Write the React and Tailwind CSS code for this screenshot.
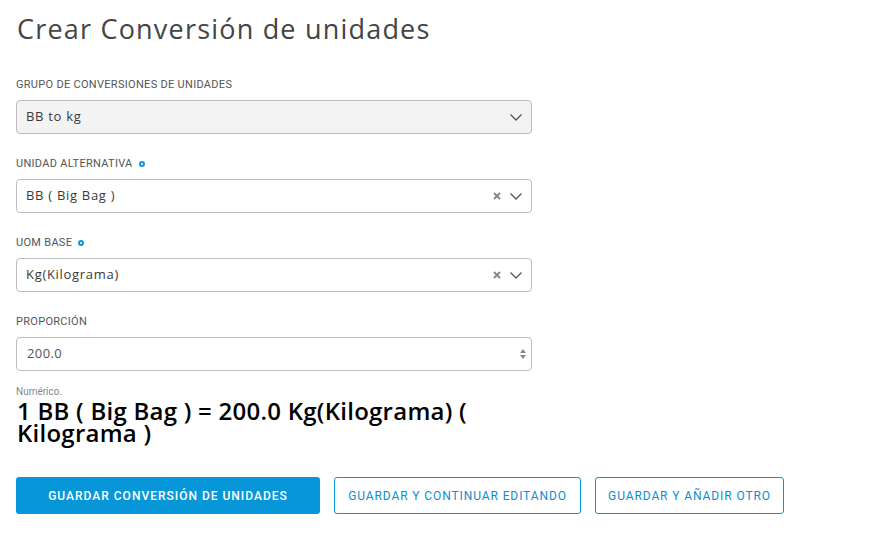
import React from 'react'

const FONT = { fontFamily: '"Open Sans", "Noto Sans", sans-serif' }

function Chevron() {
  return (
    <svg width="14" height="14" viewBox="0 0 14 14" fill="none" stroke="#555" strokeWidth="1.3">
      <path d="M1.5 4.5 L7 10 L12.5 4.5" />
    </svg>
  )
}

function Clear() {
  return (
    <svg width="8" height="8" viewBox="0 0 8 8" stroke="#888" strokeWidth="2">
      <path d="M1 1 L7 7 M7 1 L1 7" />
    </svg>
  )
}

function Label({ children, required }) {
  return (
    <label className="flex items-center gap-[6px] h-[14px] leading-[14px] text-[11px] uppercase text-[#555] mb-[8px] font-['Roboto',sans-serif] tracking-[0.3px]">
      {children}
      {required && <span className="inline-block w-[6px] h-[6px] rounded-full border-[2px] border-[#0a98d8]" />}
    </label>
  )
}

function Select({ value, disabled, clearable }) {
  return (
    <div className={`flex items-center h-[34px] w-[516px] border border-[#bdbdbd] rounded-[4px] pl-[9px] pr-[8px] text-[13px] text-[#3a3a3a] tracking-[0.7px] ${disabled ? 'bg-[#f3f3f3]' : 'bg-white'}`}>
      <span className="flex-1">{value}</span>
      {clearable && <span className="mr-[8px] flex"><Clear /></span>}
      <Chevron />
    </div>
  )
}

export default function App() {
  return (
    <div className="bg-white w-[885px] h-[560px] px-[16px] pt-[9px]" style={FONT}>
      <h1 className="text-[27px] leading-[40px] text-[#444] tracking-[1.2px] font-normal mb-[29px] ml-[1px]">Crear Conversión de unidades</h1>

      <div className="mb-[23px]">
        <Label>Grupo de conversiones de unidades</Label>
        <Select value="BB to kg" disabled />
      </div>

      <div className="mb-[23px]">
        <Label required>Unidad alternativa</Label>
        <Select value="BB ( Big Bag )" clearable />
      </div>

      <div className="mb-[23px]">
        <Label required>UOM base</Label>
        <Select value="Kg(Kilograma)" clearable />
      </div>

      <div>
        <Label>Proporción</Label>
        <div className="flex items-center h-[34px] w-[516px] border border-[#bdbdbd] rounded-[4px] pl-[10px] pr-[4px] text-[13px] text-[#555] tracking-[0.4px]">
          <span className="flex-1">200.0</span>
          <svg width="8" height="12" viewBox="0 0 8 12" fill="#888">
            <path d="M4 1 L7 5 L1 5 Z M1 7 L7 7 L4 11 Z" />
          </svg>
        </div>
        <p className="text-[10px] text-[#888] mt-[15px] leading-[12px] font-['Roboto',sans-serif]">Numérico.</p>
        <p className="text-[24px] font-semibold text-black leading-[22px] tracking-[0.25px] w-[500px] mt-[2px] ml-[1px]">1 BB ( Big Bag ) = 200.0 Kg(Kilograma) ( Kilograma )</p>
      </div>

      <div className="flex gap-[14px] mt-[33px] font-['Roboto',sans-serif]">
        <button className="shrink-0 px-0 h-[37px] w-[304px] rounded-[3px] bg-[#0797d9] text-white text-[12px] font-medium tracking-[1px] uppercase">Guardar conversión de unidades</button>
        <button className="shrink-0 px-0 h-[37px] w-[247px] rounded-[3px] border border-[#0797d9] text-[#0a8ed0] text-[12px] tracking-[0.9px] uppercase">Guardar y continuar editando</button>
        <button className="shrink-0 px-0 h-[37px] w-[189px] rounded-[3px] border border-[#0797d9] text-[#0a8ed0] text-[12px] tracking-[0.9px] uppercase">Guardar y añadir otro</button>
      </div>
    </div>
  )
}
